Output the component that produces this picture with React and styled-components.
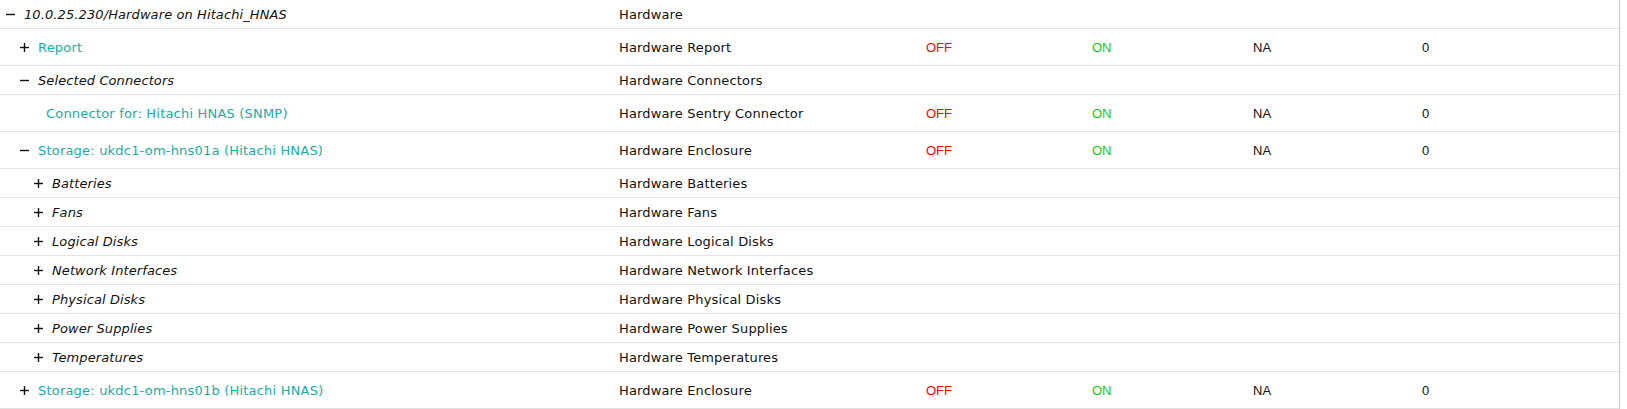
import React from "react";
import styled, { createGlobalStyle } from "styled-components";

const GlobalStyle = createGlobalStyle`
  html, body {
    margin: 0;
    padding: 0;
    background: #ffffff;
  }
  body {
    font-family: "DejaVu Sans", Verdana, sans-serif;
    font-size: 13px;
    color: #111111;
  }
`;

const Table = styled.div`
  width: 1620px;
  box-sizing: border-box;
  border-right: 1px solid #c6c6c6;
`;

const Row = styled.div`
  display: grid;
  grid-template-columns: 619px 307px 166px 161px 169px 1fr;
  align-items: center;
  height: ${(p) => (p.$tall ? 37 : 29)}px;
  box-sizing: border-box;
  border-bottom: 1px solid #e2e2e2;
`;

const NameCell = styled.div`
  display: flex;
  align-items: center;
  padding-left: ${(p) => 6 + p.$level * 14}px;
  white-space: nowrap;
`;

const Toggle = styled.span`
  display: inline-flex;
  align-items: center;
  width: 18px;
  flex: none;
`;

const LeafSpacer = styled.span`
  display: inline-block;
  width: 26px;
  flex: none;
`;

const Label = styled.span`
  color: ${(p) => (p.$link ? "#1aaba6" : "#111111")};
  font-style: ${(p) => (p.$link ? "normal" : "italic")};
  letter-spacing: ${(p) => (p.$link ? "0.2px" : "0.1px")};
  cursor: ${(p) => (p.$link ? "pointer" : "default")};
`;

const TypeCell = styled.div`
  white-space: nowrap;
  letter-spacing: 0.15px;
`;

const Value = styled.div`
  font-family: "Liberation Sans", Arial, sans-serif;
  font-size: 13px;
  color: ${(p) => p.$color || "#111111"};
`;

const Icon = ({ open }) => (
  <svg width="9" height="9" viewBox="0 0 9 9">
    <line x1="0" y1="4.5" x2="9" y2="4.5" stroke="#111" strokeWidth="1.4" />
    {!open && (
      <line x1="4.5" y1="0" x2="4.5" y2="9" stroke="#111" strokeWidth="1.4" />
    )}
  </svg>
);

const status = { state: "OFF", alert: "ON", na: "NA", count: "0" };

const rows = [
  { level: 0, open: true, label: "10.0.25.230/Hardware on Hitachi_HNAS", type: "Hardware" },
  { level: 1, open: false, link: true, label: "Report", type: "Hardware Report", values: status },
  { level: 1, open: true, label: "Selected Connectors", type: "Hardware Connectors" },
  { level: 1, leaf: true, link: true, label: "Connector for: Hitachi HNAS (SNMP)", type: "Hardware Sentry Connector", values: status },
  { level: 1, open: true, link: true, label: "Storage: ukdc1-om-hns01a (Hitachi HNAS)", type: "Hardware Enclosure", values: status },
  { level: 2, label: "Batteries", type: "Hardware Batteries" },
  { level: 2, label: "Fans", type: "Hardware Fans" },
  { level: 2, label: "Logical Disks", type: "Hardware Logical Disks" },
  { level: 2, label: "Network Interfaces", type: "Hardware Network Interfaces" },
  { level: 2, label: "Physical Disks", type: "Hardware Physical Disks" },
  { level: 2, label: "Power Supplies", type: "Hardware Power Supplies" },
  { level: 2, label: "Temperatures", type: "Hardware Temperatures" },
  { level: 1, open: false, link: true, label: "Storage: ukdc1-om-hns01b (Hitachi HNAS)", type: "Hardware Enclosure", values: status },
];

const App = () => {
  return (
    <>
      <GlobalStyle />
      <Table>
        {rows.map((row, i) => (
          <Row key={i} $tall={!!row.values}>
            <NameCell $level={row.level}>
              {row.leaf ? (
                <LeafSpacer />
              ) : (
                <Toggle>
                  <Icon open={row.open} />
                </Toggle>
              )}
              <Label $link={row.link}>{row.label}</Label>
            </NameCell>
            <TypeCell>{row.type}</TypeCell>
            {row.values ? (
              <>
                <Value $color="#ff0000">{row.values.state}</Value>
                <Value $color="#11cc11">{row.values.alert}</Value>
                <Value>{row.values.na}</Value>
                <Value>{row.values.count}</Value>
              </>
            ) : null}
          </Row>
        ))}
      </Table>
    </>
  );
};

export default App;
